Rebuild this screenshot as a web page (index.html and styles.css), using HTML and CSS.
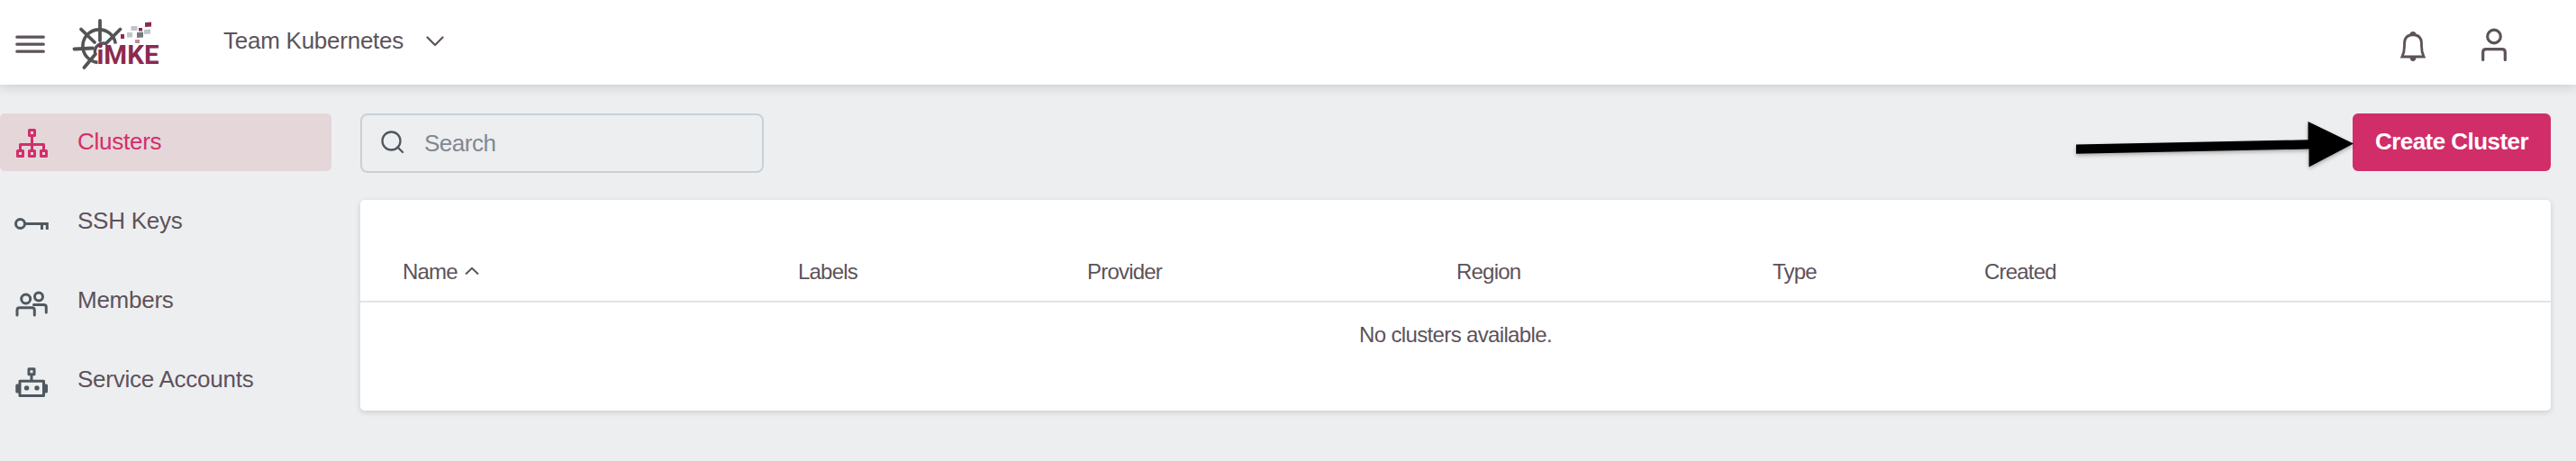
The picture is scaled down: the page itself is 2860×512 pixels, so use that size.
FILE: index.html
```html
<!DOCTYPE html>
<html lang="en">
<head>
<meta charset="utf-8">
<title>Clusters</title>
<link rel="stylesheet" href="styles.css">
</head>
<body>
<header class="topbar">
  <svg class="menu" width="34" height="22" viewBox="0 0 34 22" fill="none" stroke="#5d525a" stroke-width="3.2" stroke-linecap="round"><path d="M2.800 3.200H32.300M2.800 11.200H32.300M2.800 19.200H32.300"/></svg>
  <svg class="logo" width="100" height="60" viewBox="0 0 100 60">
    <g fill="none" stroke="#545456" stroke-width="3.8" stroke-linecap="round">
      <path stroke-linecap="butt" stroke-width="3.6" d="M48.3 30.5A18.3 18.3 0 1 0 28.5 51.4"/>
      <path stroke-linecap="butt" stroke-width="3.4" d="M39 31A9.5 9.5 0 0 0 25.500 41"/>
      <path d="M31 5V27M10 14.500L25 29M53.500 14.500L38 30M2.500 36.500L23 35.500M13.500 57L26 42"/>
    </g>
    <text class="logo-text" x="27.5" y="53" textLength="69" lengthAdjust="spacingAndGlyphs">iMKE</text>
    <g fill="#8b2a50"><path d="M81 7L88 6.500V11.500L81 12z"/><path d="M54 20h4v5h-4z"/><path d="M74 13h4v3.500h-4z"/></g>
    <g fill="#bfc5c9"><path d="M65.500 11h7v5h-7zM61 18h6v5.500h-6zM80 15l7-.5v5l-7 .5z"/></g>
    <path fill="#747b7f" d="M72 18l7-.5v6l-7 .5z"/><path fill="#bf8ba2" d="M70 26h5v4h-5z"/>
  </svg>
  <div class="project"><span class="label">Team Kubernetes</span>
    <svg width="20" height="12" viewBox="0 0 20 12" fill="none" stroke="#5d525a" stroke-width="2.2" stroke-linecap="round" stroke-linejoin="round"><path d="M1.500 1.500L10 10L18.500 1.500"/></svg>
  </div>
  <svg class="bell" width="30" height="36" viewBox="0 0 30 36"><g fill="none" stroke="#5d525a" stroke-width="2.8"><path d="M3 30Q5.500 25 5.500 18V15.500Q5.500 6 15 5.500Q24.500 6 24.500 15.500V18Q24.500 25 27 30Z"/></g><path fill="#5d525a" d="M11.500 5Q12 2 15 2Q18 2 18.500 5zM11.500 31Q12 35 15 35Q18 35 18.500 31z"/></svg>
  <svg class="user" width="30" height="38" viewBox="0 0 30 38" fill="none" stroke="#5d525a" stroke-width="3.2" stroke-linecap="round"><circle cx="15" cy="9.500" r="7.300"/><path d="M2.700 35.500V27Q2.700 23.600 6 23.600H24Q27.300 23.600 27.300 27V35.500"/></svg>
</header>
<div class="body">
  <nav class="sidebar">
    <a class="item active"><svg width="40" height="40" viewBox="0 0 40 40" fill="none" stroke="#d32e6b" stroke-width="3"><path d="M16.500 5.500h6v6h-6zM3.500 28.500h6v6h-6zM16.500 28.500h6v6h-6zM29.500 28.500h6v6h-6zM19.500 12V28M6.500 28V21.500H32.500V28" stroke-linejoin="round"/></svg><span>Clusters</span></a>
    <a class="item"><svg width="40" height="40" viewBox="0 0 40 40" fill="none" stroke="#50585f" stroke-width="3"><circle cx="6.500" cy="21.500" r="5"/><path d="M12 21.500H37.800M36.300 21.500V28M30.500 21.500V28"/></svg><span>SSH Keys</span></a>
    <a class="item"><svg width="40" height="40" viewBox="0 0 40 40" fill="none" stroke="#50585f" stroke-width="3" stroke-linecap="round"><circle cx="12.700" cy="17" r="5"/><circle cx="27" cy="14.500" r="4.500"/><path d="M3 35V29.500Q3 26.800 5.700 26.800H19.600Q22.300 26.800 22.300 29.500V35M21.500 23.600H32.500Q35.300 23.600 35.300 26.300V32"/></svg><span>Members</span></a>
    <a class="item"><svg width="40" height="40" viewBox="0 0 40 40" fill="none" stroke="#50585f" stroke-width="3"><path d="M16 6.800h6v6h-6zM19 13V20M6 20.300H32.500V36.500H6z" stroke-linejoin="round"/><g fill="#50585f" stroke="none"><rect x="1.300" y="23.500" width="4.500" height="10" rx="1.500"/><rect x="32.500" y="23.500" width="4.500" height="10" rx="1.500"/><circle cx="13.600" cy="27.900" r="2.700"/><circle cx="25" cy="27.900" r="2.700"/></g></svg><span>Service Accounts</span></a>
  </nav>
  <main class="content">
    <div class="toolbar">
      <div class="search"><svg width="26" height="26" viewBox="0 0 26 26" fill="none" stroke="#50585f" stroke-width="2.3" stroke-linecap="round"><circle cx="11.500" cy="11.500" r="10"/><path d="M18.500 18.500L24 24"/></svg><span>Search</span></div>
      <button class="create"><span>Create Cluster</span></button>
    </div>
    <section class="card">
      <div class="row head">
        <span class="name">Name <svg width="16" height="10" viewBox="0 0 16 10" fill="none" stroke="#5d525a" stroke-width="2"><path d="M1 8.500L8 1.800L15 8.500"/></svg></span>
        <span>Labels</span><span>Provider</span><span>Region</span><span>Type</span><span>Created</span>
      </div>
      <div class="empty">No clusters available.</div>
    </section>
  </main>
</div>
<svg class="arrow" width="320" height="64" viewBox="0 0 320 64"><path d="M5 32.500L262.500 27.300V7L313 31.500L263.500 57.500V37.500L5 42.800z"/></svg>
</body>
</html>
```
FILE: styles.css
```css
* { box-sizing: border-box; }
body {
  margin: 0;
  height: 512px;
  overflow: hidden;
  background: #edeef0;
  color: #5d525a;
  font: 26px/32px "Liberation Sans", Arial, sans-serif;
  letter-spacing: -0.25px;
}
svg { display: block; flex: none; }
.topbar {
  position: relative;
  display: flex;
  align-items: flex-start;
  height: 94px;
  padding-left: 16px;
  background: #fff;
  box-shadow: 0 0 14px rgba(0, 0, 0, 0.2);
}
.menu { margin-top: 38px; }
.logo { margin: 18px 0 0 30px; }
.logo-text { font: 700 29.5px Roboto, sans-serif; fill: #8b2a50; letter-spacing: 0; }
.project { display: flex; align-items: center; gap: 25px; margin: 29px auto 0 68px; }
.project svg { margin-top: 2px; }
.bell { margin: 33px 60px 0 0; }
.user { margin: 31px 76px 0 0; }
.body { display: flex; gap: 32px; padding: 32px 28px 0 0; }
.sidebar { display: flex; flex-direction: column; gap: 24px; width: 368px; }
.item {
  display: flex;
  align-items: center;
  gap: 30px;
  height: 64px;
  padding: 0 0 2px 16px;
  border-radius: 5px;
}
.item svg { margin-top: 4px; }
.item.active { background: #e5d6d9; color: #d32e6b; }
.content { flex: 1; }
.toolbar { display: flex; justify-content: space-between; align-items: flex-start; height: 96px; }
.search {
  display: flex;
  align-items: center;
  gap: 22px;
  width: 448px;
  height: 66px;
  padding-left: 21px;
  border: 2px solid #c8d0d7;
  border-radius: 8px;
  color: #808890;
  letter-spacing: -0.5px;
}
.search svg { margin-bottom: 2px; }
.create {
  width: 220px;
  height: 64px;
  padding: 0 0 2px;
  border: 0;
  border-radius: 6px;
  background: #d12d69;
  color: #fff;
  font: 700 26px/32px "Liberation Sans", Arial, sans-serif;
  letter-spacing: -0.55px;
}
.card {
  height: 234px;
  border-radius: 5px;
  background: #fff;
  box-shadow: 0 2px 6px rgba(0, 0, 0, 0.14);
  font-size: 24px;
  letter-spacing: -0.65px;
}
.head {
  display: grid;
  align-items: start;
  grid-template-columns: 439px 321px 410px 351px 235px 1fr;
  height: 114px;
  padding: 64px 0 0 47px;
  border-bottom: 2px solid #e2e3e4;
  letter-spacing: -0.8px;
}
.name { display: flex; align-items: center; gap: 8px; }
.name svg { margin-top: -3px; }
.empty { padding-top: 20px; text-align: center; }
.arrow { position: absolute; left: 2300px; top: 128px; filter: drop-shadow(0 2px 2px rgba(0, 0, 0, 0.3)); }
```
